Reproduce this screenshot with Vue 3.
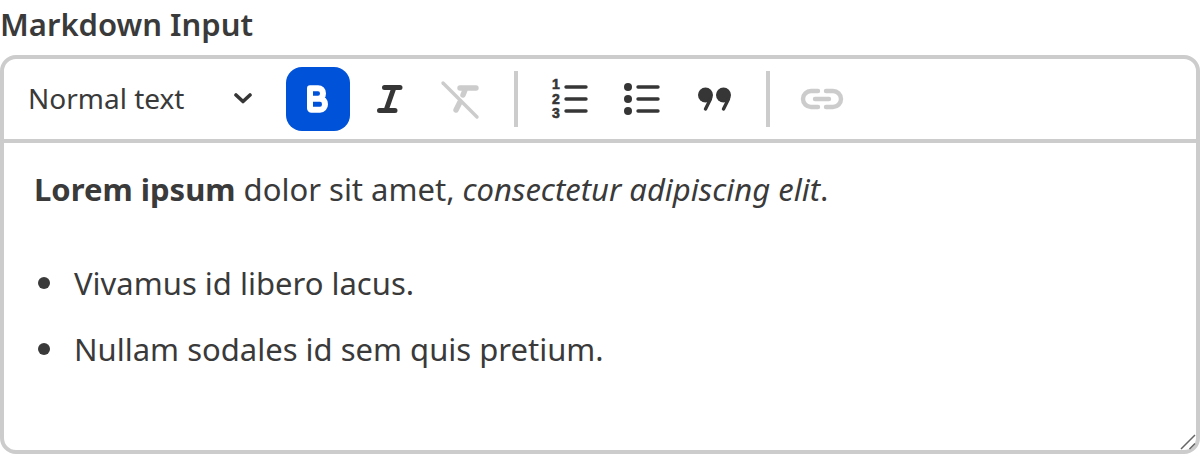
<script setup>
const listItems = ['Vivamus id libero lacus.', 'Nullam sodales id sem quis pretium.']
</script>

<template>
  <div class="field">
    <label class="field-label">Markdown Input</label>
    <div class="editor">
      <div class="toolbar">
        <div class="select">
          <span>Normal text</span>
          <svg class="chevron" width="20" height="12" viewBox="0 0 20 12">
            <path d="M2 3l7 6.500L16 3" fill="none" stroke="#363636" stroke-width="3.600" stroke-linecap="round" stroke-linejoin="round" />
          </svg>
        </div>
        <button class="tool active">
          <svg width="48" height="48" viewBox="0 0 48 48">
            <path d="M16 13.200h8c3 0 5 2.200 5 5.200 0 3.100-2 5.400-5 5.400h-8zM16 23.800h10c3 0 5 2.300 5 5.400 0 3.100-2 5.600-5 5.600H17.500c-.8 0-1.500-.7-1.500-1.500z" fill="none" stroke="#fff" stroke-width="6" stroke-linejoin="round" />
          </svg>
        </button>
        <button class="tool">
          <svg width="48" height="48" viewBox="0 0 48 48">
            <path d="M18.500 12.500H34M13.500 35.500H29M28 12.500L20 35.500" fill="none" stroke="#363636" stroke-width="5" stroke-linecap="round" />
          </svg>
        </button>
        <button class="tool">
          <svg width="48" height="48" viewBox="0 0 48 48">
            <path d="M5 8l34 34" fill="none" stroke="#cccccc" stroke-width="3.400" stroke-linecap="round" />
            <path d="M22 13h16M27 15l-2 5M22 27l-4 8" fill="none" stroke="#cccccc" stroke-width="5.400" stroke-linecap="round" />
          </svg>
        </button>
        <span class="divider"></span>
        <button class="tool">
          <svg width="48" height="48" viewBox="0 0 48 48">
            <text class="digit">
              <tspan x="10" y="14">1</tspan>
              <tspan x="10" y="28.500">2</tspan>
              <tspan x="10" y="43">3</tspan>
            </text>
            <path d="M20 12h20M20 24h20M20 36h20" fill="none" stroke="#363636" stroke-width="3.400" stroke-linecap="round" />
          </svg>
        </button>
        <button class="tool">
          <svg width="48" height="48" viewBox="0 0 48 48">
            <circle cx="10" cy="12" r="4" fill="#363636" />
            <circle cx="10" cy="24" r="4" fill="#363636" />
            <circle cx="10" cy="36" r="4" fill="#363636" />
            <path d="M20 12h20M20 24h20M20 36h20" fill="none" stroke="#363636" stroke-width="3.400" stroke-linecap="round" />
          </svg>
        </button>
        <button class="tool">
          <svg width="48" height="48" viewBox="0 0 48 48">
            <circle cx="15.500" cy="20" r="7.500" fill="#363636" />
            <circle cx="33.500" cy="20" r="7.500" fill="#363636" />
            <path d="M20.500 24l-5 10M38.500 24l-5 10" fill="none" stroke="#363636" stroke-width="3.400" stroke-linecap="round" />
          </svg>
        </button>
        <span class="divider"></span>
        <button class="tool">
          <svg width="48" height="48" viewBox="0 0 48 48">
            <path d="M20 16h-7a8 8 0 0 0 0 16h7M28 16h7a8 8 0 0 1 0 16h-7M17 24h14" fill="none" stroke="#cccccc" stroke-width="4.400" stroke-linecap="round" />
          </svg>
        </button>
      </div>
      <div class="content">
        <p><strong>Lorem ipsum</strong> dolor sit amet, <em>consectetur adipiscing elit</em>.</p>
        <ul>
          <li v-for="item in listItems" :key="item">{{ item }}</li>
        </ul>
        <svg class="resize-grip" width="16" height="16" viewBox="0 0 16 16">
          <path d="M1 15L15 1M9.500 15L15 9.500" fill="none" stroke="#666" stroke-width="1.500" />
        </svg>
      </div>
    </div>
  </div>
</template>

<style scoped>
.field {
  width: 1200px;
  height: 454px;
  display: flex;
  flex-direction: column;
  font-family: "Noto Sans", sans-serif;
  color: #3a3a3a;
  overflow: hidden;
}
.field-label {
  display: block;
  height: 55px;
  font-size: 31px;
  font-weight: 600;
  line-height: 48px;
}
.editor {
  flex: 1;
  display: flex;
  flex-direction: column;
  border: 4px solid #ccc;
  border-radius: 16px;
  background: #fff;
}
.toolbar {
  display: flex;
  align-items: center;
  gap: 8px;
  height: 84px;
  box-sizing: border-box;
  border-bottom: 4px solid #ccc;
}
.select {
  width: 274px;
  box-sizing: border-box;
  padding: 0 24px 2px 24px;
  display: flex;
  align-items: center;
  justify-content: space-between;
  font-size: 28px;
}
.tool {
  width: 64px;
  height: 64px;
  padding: 8px;
  border: 0;
  border-radius: 16px;
  background: transparent;
  display: flex;
}
.tool.active {
  background: #0052d9;
}
.divider {
  width: 4px;
  height: 56px;
  margin: 0 12px;
  background: #ccc;
}
.digit {
  font-size: 14px;
  font-weight: 800;
  fill: #363636;
  stroke: #363636;
  stroke-width: 0.6px;
  text-anchor: middle;
}
.content {
  flex: 1;
  position: relative;
  padding: 24px 30px;
  font-size: 31px;
  line-height: 44px;
}
.content p {
  margin: 0 0 50px;
}
.content ul {
  margin: 0;
  padding: 0 0 0 40px;
  list-style: none;
}
.content li {
  position: relative;
  margin-bottom: 22px;
}
.content li::before {
  content: "";
  position: absolute;
  left: -36px;
  top: 16px;
  width: 12px;
  height: 12px;
  border-radius: 50%;
  background: #3a3a3a;
}
.resize-grip {
  position: absolute;
  right: 0;
  bottom: 0;
}
</style>
